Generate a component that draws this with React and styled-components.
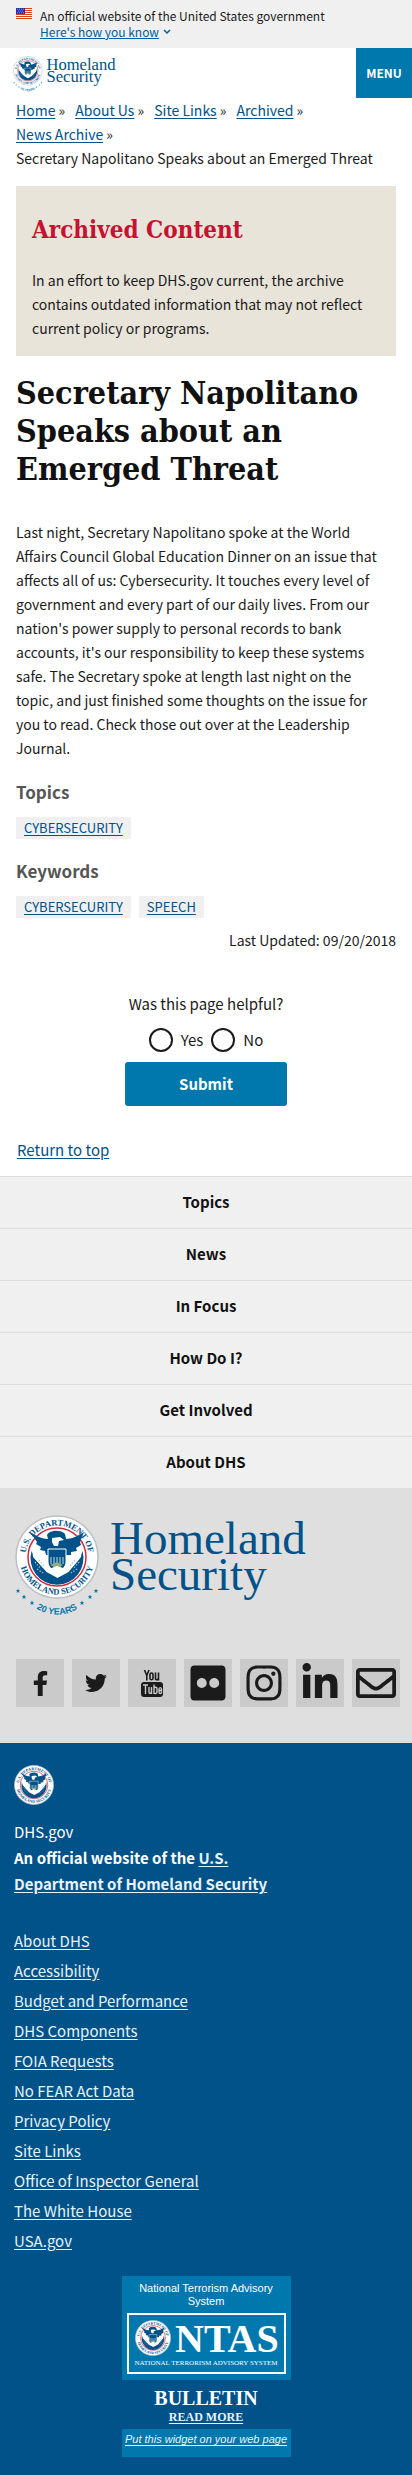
import React from "react";
import styled, { createGlobalStyle } from "styled-components";
import { FaFacebookF, FaTwitter, FaFlickr, FaInstagram, FaLinkedinIn, FaRegEnvelope } from "react-icons/fa";

const sans = `"Noto Sans CJK SC", "Noto Sans", sans-serif`;
const slab = `"DejaVu Serif Condensed", "DejaVu Serif", serif`;
const roman = `"Liberation Serif", serif`;

const Global = createGlobalStyle`
  *, *::before, *::after { box-sizing: border-box; }
  body { margin: 0; background: #fff; color: #1b1b1b; font-family: ${sans}; font-size: 14px; line-height: 24px; }
  h1, h2, h3, p, ul, ol, fieldset { margin: 0; padding: 0; border: 0; }
  ul, ol { list-style: none; }
  svg { display: block; flex: none; overflow: visible; }
`;

const Link = styled.a`
  color: ${(p) => (p.$light ? "#e6f3fa" : "#005288")};
  text-decoration: underline;
  text-underline-offset: 2px;
`;

const Banner = styled.div`
  display: flex;
  gap: 8px;
  background: #f0f0f0;
  padding: 8px 16px;
  font-size: 12px;
  line-height: 16px;
`;
const BannerToggle = styled.button`
  display: flex;
  align-items: center;
  gap: 4px;
  border: 0;
  padding: 0;
  background: none;
  color: #005ea2;
  font: inherit;
  cursor: pointer;
  span { text-decoration: underline; }
`;
const Header = styled.header`
  display: flex;
  justify-content: space-between;
  align-items: flex-start;
`;
const LogoLink = styled.a`
  display: block;
  padding: ${(p) => p.$pad};
`;
const MenuButton = styled.button`
  width: 56px;
  height: 50px;
  border: 0;
  padding: 0;
  background: #0078ae;
  color: #fff;
  font: 700 12px/20px ${sans};
`;
const Crumbs = styled.ol`
  display: flex;
  flex-wrap: wrap;
  column-gap: 10px;
  padding: 0 16px;
`;
const Main = styled.main`
  padding: 16px 16px 0;
`;
const Notice = styled.section`
  background: #e8e4da;
  padding: 30px 16px 16px;
`;
const NoticeTitle = styled.h2`
  color: #c41230;
  font: 700 24px/28px ${slab};
  padding-bottom: 24px;
`;
const Title = styled.h1`
  font: 700 32px/38px ${slab};
  color: #111;
  padding: 18px 0 32px;
`;
const Article = styled.p`
  padding-right: 8px;
`;
const TagTitle = styled.h2`
  font-size: 17px;
  line-height: 24px;
  color: #555;
  padding-top: 20px;
`;
const Tags = styled.ul`
  display: flex;
  gap: 8px;
  padding: 13px 0 0;
  font-size: 13px;
  line-height: 22px;
  li { background: #f0f0f0; padding: 0 8px; }
`;
const Updated = styled.p`
  text-align: right;
  padding-top: 10px;
`;
const Feedback = styled.form`
  display: flex;
  flex-direction: column;
  align-items: center;
  padding-top: 40px;
  font-size: 15px;
`;
const Choices = styled.fieldset`
  legend { padding: 0 0 12px; margin: 0 auto; }
`;
const ChoiceRow = styled.div`
  display: flex;
  justify-content: center;
  gap: 8px;
`;
const Choice = styled.label`
  display: flex;
  align-items: center;
  gap: 8px;
`;
const Radio = styled.input`
  appearance: none;
  width: 24px;
  height: 24px;
  margin: 0;
  border: 2px solid #1b1b1b;
  border-radius: 50%;
  background: #fff;
  &:checked { box-shadow: inset 0 0 0 4px #fff; background: #0078ae; }
`;
const Submit = styled.button`
  width: 162px;
  height: 44px;
  margin-top: 10px;
  border: 0;
  border-radius: 3px;
  background: #0078ae;
  color: #fff;
  font: 700 15px/20px ${sans};
`;
const ReturnTop = styled.div`
  padding: 32px 17px 14px;
  font-size: 15px;
`;
const FooterNav = styled.nav`
  a {
    display: block;
    border-top: 1px solid #dcdee0;
    background: #f0f0f0;
    color: #111;
    font-size: 15px;
    font-weight: 700;
    line-height: 24px;
    padding: 13px 16px 14px;
    text-align: center;
    text-decoration: none;
  }
`;
const Brand = styled.div`
  background: #dfdfdf;
  padding-bottom: 36px;
`;
const Social = styled.ul`
  display: flex;
  gap: 8px;
  padding: 42px 12px 0 16px;
  a {
    display: flex;
    align-items: center;
    justify-content: center;
    width: 48px;
    height: 48px;
    background: #cacaca;
    color: #1b1b1b;
  }
`;
const Identifier = styled.footer`
  background: #005288;
  color: #fff;
  padding: 22px 14px 18px;
`;
const Agency = styled.div`
  padding: 14px 0 29px;
  font-size: 15px;
  line-height: 26px;
  max-width: 300px;
`;
const FooterLinks = styled.ul`
  font-size: 15px;
  line-height: 30px;
`;
const Widget = styled.aside`
  width: 169px;
  margin: 20px auto 0;
  display: flex;
  flex-direction: column;
  text-align: center;
  font-family: "Liberation Sans", sans-serif;
  font-size: 11px;
  line-height: 13px;
`;
const WidgetPanel = styled.div`
  background: #0078ae;
  padding: ${(p) => p.$pad};
`;
const Badge = styled.div`
  margin-top: 5px;
  border: 2px solid #fff;
`;
const Bulletin = styled.p`
  font-family: ${roman};
  padding: 7px 0 4px;
  strong { display: block; font-size: 20px; line-height: 22px; font-weight: 700; }
  a { display: block; font-size: 12px; line-height: 16px; font-weight: 700; }
`;

const Seal = ({ size }) => (
  <svg width={size} height={size} viewBox="0 0 84 84" aria-hidden="true">
    <defs>
      <path id={"top" + size} d="M10.500 42a31.500 31.500 0 0 1 63 0" />
      <path id={"bot" + size} d="M4.500 42a37.500 37.500 0 0 0 75 0" />
    </defs>
    <circle cx="42" cy="42" r="41" fill="#fff" stroke="#b9c0c6" strokeWidth="1.500" />
    <circle cx="42" cy="42" r="29" fill="#fff" stroke="#cf2a3f" strokeWidth="1.500" />
    <path d="M16.500 36a26.500 26.500 0 1 0 51 0l-3 8-11 13-11 6-11-6-11-13z" fill="#005288" />
    <path d="M17 31l14 11 5 5v10l-8-4-10-11z M67 31L53 42l-5 5v10l8-4 10-11z" fill="#fff" />
    <path d="M15 17c6 4 12 7 18 7l-1-4c2-5 14-6 18-1l1 5c6 0 12-3 18-7l-4 10 1 3-5 3 1 3-6 1v3h-6l-5 3h-6l-3-3h-5l-1-4-5-1 1-3-5-3 1-2z" fill="#005288" />
    <path d="M37 23l8-1 4 3-5 1-1 5h-4l-2-4z" fill="#fff" />
    <path d="M33 34h18v13c0 5-5 9-9 10-4-1-9-5-9-10z" fill="#005288" stroke="#fff" strokeWidth="1" />
    <path d="M36 42v7m3-7v11m3-11v12m3-12v11m3-11v7" stroke="#fff" strokeWidth=".8" />
    <path d="M35 50l7-3 6 3-6 3z" fill="#8fae7c" />
    <path d="M34 54l8-3 9 3-5 6h-8z" fill="#fff" />
    <path d="M20 47l6 7M24 45l5 6M22 54l6 4M64 47l-6 7M60 45l-5 6M62 54l-6 4" stroke="#9ec3dc" strokeWidth="1.200" strokeDasharray="1.500 1.500" />
    <g fill="#005288" fontFamily="Liberation Serif, serif" fontSize="8.500" fontWeight="700">
      <text><textPath href={"#top" + size} startOffset="50%" textAnchor="middle">U.S. DEPARTMENT OF</textPath></text>
      <text><textPath href={"#bot" + size} startOffset="50%" textAnchor="middle">HOMELAND SECURITY</textPath></text>
    </g>
  </svg>
);

const star = "M0-2.400L.7-.8 2.300-.8 1 .3 1.500 2 0 1-1.500 2-1 .3-2.300-.8-.7-.8z";
const Logo = ({ width, height }) => (
  <svg width={width} height={height} viewBox="0 0 292 102" role="img" aria-label="Homeland Security">
    <defs><path id={"years" + width} d="M6 77a43 50 0 0 0 72 0" /></defs>
    <Seal size={84} />
    {[[3, 76], [9, 82], [17, 88], [67, 88], [75, 82], [81, 76]].map(([x, y]) => (
      <path key={x} d={star} transform={`translate(${x} ${y})`} fill="#0078ae" />
    ))}
    <text fill="#0078ae" fontFamily="Liberation Sans, sans-serif" fontSize="9" fontWeight="700">
      <textPath href={"#years" + width} startOffset="50%" textAnchor="middle">20 YEARS</textPath>
    </text>
    <g fill="#005288" fontFamily="Liberation Serif, serif" fontSize="47">
      <text x="95" y="39">Homeland</text>
      <text x="95" y="75">Security</text>
    </g>
  </svg>
);

const Flag = () => (
  <svg width="16" height="11" viewBox="0 0 16 11" role="img" aria-label="U.S. flag">
    <path fill="#fff" d="M0 0h16v11H0z" />
    <path stroke="#db3e1f" strokeWidth="1" d="M0 .5h16M0 2.500h16M0 4.500h16M0 6.500h16M0 8.500h16M0 10.500h16" />
    <path fill="#1e33b1" d="M0 0h9v6H0z" />
    <path stroke="#fff" strokeWidth=".6" strokeDasharray=".8 1.200" d="M1 1.200h7M2 3h6M1 4.800h7" />
  </svg>
);

const YouTube = () => (
  <svg width="24" height="28" viewBox="0 0 24 28" aria-hidden="true">
    <g fill="none" stroke="#1b1b1b" strokeWidth="1.600">
      <path d="M4.500 1l2.300 5.500L9 1M6.800 6v5.500" />
      <rect x="10" y="4" width="3" height="6.800" rx="1.500" />
      <path d="M15.500 3.500v6c0 2 2 1.500 3 0V3.500v8" />
    </g>
    <rect x="1" y="13" width="22" height="15" rx="3" fill="#1b1b1b" />
    <g fill="none" stroke="#cacaca" strokeWidth="1.400">
      <path d="M3 16h5M5.500 16v9M9 18v5c0 2 1.500 1.500 2.500.500V18v7M14 15.500V25M14 19c2-1.500 3-.5 3 1v3c0 1.500-1.500 2-3 1M21.500 22.500c0 3-2.500 2.500-2.500.500v-2.500c0-2.500 2.500-2.500 2.500 0v1H19" />
    </g>
  </svg>
);

const crumbs = ["Home", "About Us", "Site Links", "Archived", "News Archive"];
const navItems = ["Topics", "News", "In Focus", "How Do I?", "Get Involved", "About DHS"];
const footerItems = ["About DHS", "Accessibility", "Budget and Performance", "DHS Components", "FOIA Requests", "No FEAR Act Data", "Privacy Policy", "Site Links", "Office of Inspector General", "The White House", "USA.gov"];
const socials = [
  ["Facebook", <FaFacebookF size={25} />],
  ["Twitter", <FaTwitter size={22} />],
  ["YouTube", <YouTube />],
  ["Flickr", <FaFlickr size={40} />],
  ["Instagram", <FaInstagram size={40} />],
  ["LinkedIn", <FaLinkedinIn size={40} />],
  ["Email", <FaRegEnvelope size={40} />],
];

export default function App() {
  return (
    <>
      <Global />
      <Banner>
        <Flag />
        <div>
          <p>An official website of the United States government</p>
          <BannerToggle type="button">
            <span>Here's how you know</span>
            <svg width="8" height="6" viewBox="0 0 8 6"><path d="M1 1l3 3 3-3" fill="none" stroke="#005ea2" strokeWidth="1.500" /></svg>
          </BannerToggle>
        </div>
      </Banner>
      <Header>
        <LogoLink href="#" $pad="8px 13px 0"><Logo width={103} height={36} /></LogoLink>
        <MenuButton type="button">MENU</MenuButton>
      </Header>
      <Crumbs>
        {crumbs.map((c) => <li key={c}><Link href="#">{c}</Link> »</li>)}
        <li>Secretary Napolitano Speaks about an Emerged Threat</li>
      </Crumbs>
      <Main>
        <Notice>
          <NoticeTitle>Archived Content</NoticeTitle>
          <p>In an effort to keep DHS.gov current, the archive contains outdated information that may not reflect current policy or programs.</p>
        </Notice>
        <Title>Secretary Napolitano Speaks about an Emerged Threat</Title>
        <Article>
          Last night, Secretary Napolitano spoke at the World Affairs Council Global Education Dinner on an issue that
          affects all of us: Cybersecurity. It touches every level of government and every part of our daily lives. From
          our nation's power supply to personal records to bank accounts, it's our responsibility to keep these systems
          safe. The Secretary spoke at length last night on the topic, and just finished some thoughts on the issue for
          you to read. Check those out over at the Leadership Journal.
        </Article>
        <TagTitle>Topics</TagTitle>
        <Tags><li><Link href="#">CYBERSECURITY</Link></li></Tags>
        <TagTitle>Keywords</TagTitle>
        <Tags>
          <li><Link href="#">CYBERSECURITY</Link></li>
          <li><Link href="#">SPEECH</Link></li>
        </Tags>
        <Updated>Last Updated: 09/20/2018</Updated>
        <Feedback>
          <Choices>
            <legend>Was this page helpful?</legend>
            <ChoiceRow>
              <Choice><Radio type="radio" name="helpful" value="yes" />Yes</Choice>
              <Choice><Radio type="radio" name="helpful" value="no" />No</Choice>
            </ChoiceRow>
          </Choices>
          <Submit type="submit">Submit</Submit>
        </Feedback>
      </Main>
      <ReturnTop><Link href="#">Return to top</Link></ReturnTop>
      <FooterNav>{navItems.map((n) => <a key={n} href="#">{n}</a>)}</FooterNav>
      <Brand>
        <LogoLink href="#" $pad="27px 15px 0"><Logo width={292} height={102} /></LogoLink>
        <Social>
          {socials.map(([name, icon]) => <li key={name}><a href="#" aria-label={name}>{icon}</a></li>)}
        </Social>
      </Brand>
      <Identifier>
        <Seal size={40} />
        <Agency>
          <p>DHS.gov</p>
          <p><strong>An official website of the <Link $light href="#">U.S. Department of Homeland Security</Link></strong></p>
        </Agency>
        <FooterLinks>{footerItems.map((f) => <li key={f}><Link $light href="#">{f}</Link></li>)}</FooterLinks>
        <Widget>
          <WidgetPanel $pad="6px 5px">
            <p>National Terrorism Advisory System</p>
            <Badge>
              <svg width="100%" height="57" viewBox="0 0 155 57" role="img" aria-label="NTAS">
                <g transform="translate(6 5)"><Seal size={36} /></g>
                <g fill="#fff" fontFamily="Liberation Serif, serif">
                  <text x="46" y="37" fontSize="40" fontWeight="700">NTAS</text>
                  <text x="77" y="50" fontSize="7" textAnchor="middle">NATIONAL TERRORISM ADVISORY SYSTEM</text>
                </g>
              </svg>
            </Badge>
          </WidgetPanel>
          <Bulletin><strong>BULLETIN</strong><Link $light href="#">READ MORE</Link></Bulletin>
          <WidgetPanel $pad="4px 0 11px"><em><Link $light href="#">Put this widget on your web page</Link></em></WidgetPanel>
        </Widget>
      </Identifier>
    </>
  );
}
